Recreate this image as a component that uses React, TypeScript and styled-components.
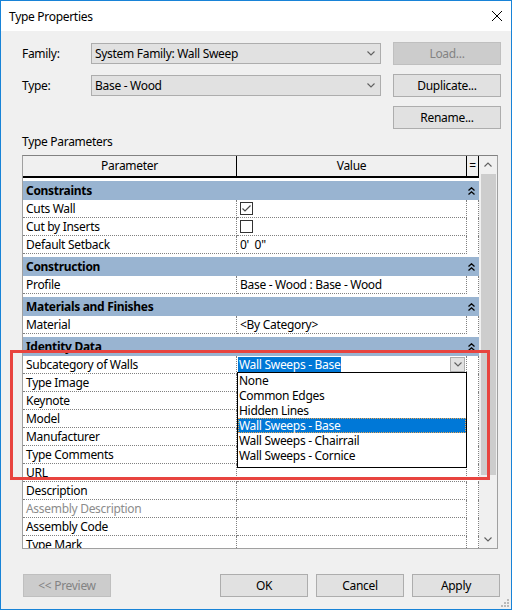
import React from 'react'
import styled, { createGlobalStyle } from 'styled-components'

const GlobalStyle = createGlobalStyle`
  html, body {
    margin: 0;
    padding: 0;
    background: #ffffff;
  }
  body {
    font-family: "Noto Sans", "Open Sans", sans-serif;
    font-size: 12px;
    letter-spacing: -0.3px;
    color: #000000;
  }
  * {
    box-sizing: border-box;
  }
`

const Window = styled.div`
  position: relative;
  width: 512px;
  height: 610px;
  border: 1px solid #1883d7;
  background: #f0f0f0;
  display: flex;
  flex-direction: column;
  overflow: hidden;
`

const TitleBar = styled.div`
  height: 30px;
  flex-shrink: 0;
  background: #ffffff;
  display: flex;
  align-items: center;
  justify-content: space-between;
  padding: 0 9px 0 8px;
`

const Body = styled.div`
  flex: 1;
  display: flex;
  flex-direction: column;
  padding: 11px 10px 0 21px;
`

const TopGrid = styled.div`
  display: grid;
  grid-template-columns: 69px 290px 1fr;
  grid-auto-rows: 23px;
  row-gap: 9px;
  align-items: center;
`

const Label = styled.span`
  line-height: 16px;
`

const Combo = styled.div`
  height: 21px;
  background: #e1e1e1;
  border: 1px solid #adadad;
  display: flex;
  align-items: center;
  justify-content: space-between;
  padding: 0 5px 0 3px;
  white-space: nowrap;
`

const Button = styled.button<{ $disabled?: boolean; $width?: number }>`
  height: 23px;
  width: ${(p) => (p.$width ? `${p.$width}px` : 'auto')};
  padding: 0;
  font: inherit;
  letter-spacing: inherit;
  background: ${(p) => (p.$disabled ? '#cccccc' : '#e1e1e1')};
  border: 1px solid ${(p) => (p.$disabled ? '#bfbfbf' : '#adadad')};
  color: ${(p) => (p.$disabled ? '#838383' : '#000000')};
`

const SideButton = styled(Button)`
  margin-left: 12px;
`

const SectionLabel = styled.div`
  margin-top: 5px;
  line-height: 16px;
`

const Table = styled.div`
  margin-top: 5px;
  width: 476px;
  height: 394px;
  border: 1px solid #a0a0a0;
  border-top-color: #828282;
  background: #ffffff;
  display: flex;
`

const GridArea = styled.div`
  flex: 1;
  display: flex;
  flex-direction: column;
  overflow: hidden;
`

const HeaderRow = styled.div`
  display: grid;
  grid-template-columns: 214px 230px 12px;
  height: 22px;
  flex-shrink: 0;
  background: #f0f0f0;
`

const HeaderCell = styled.div`
  border-right: 1px solid #000000;
  border-bottom: 2px solid #000000;
  text-align: center;
  line-height: 20px;
`

const Band = styled.div`
  margin-top: 3px;
  height: 19px;
  flex-shrink: 0;
  background: #99b4d1;
  display: grid;
  grid-template-columns: 444px 12px;
  align-items: center;
  font-weight: bold;
`

const BandTitle = styled.span`
  padding-left: 3px;
  line-height: 19px;
`

const BandToggle = styled.span`
  display: flex;
  padding-left: 1px;
`

const Row = styled.div`
  display: grid;
  grid-template-columns: 214px 230px 12px;
  height: 18px;
  flex-shrink: 0;
`

const Cell = styled.div<{ $muted?: boolean }>`
  position: relative;
  border-right: 1px dotted #808080;
  border-bottom: 1px dotted #808080;
  padding-left: 3px;
  line-height: 17px;
  white-space: pre;
  color: ${(p) => (p.$muted ? '#8c8c8c' : '#000000')};
  display: flex;
  align-items: center;
`

const EditCell = styled(Cell)`
  padding-left: 1px;
  overflow: visible;
`

const EqCell = styled.div`
  border-right: 1px dotted #808080;
`

const Selection = styled.span`
  background: #0078d7;
  color: #ffffff;
  height: 15px;
  line-height: 15px;
  padding: 0 1px;
`

const DropButton = styled.span`
  margin-left: auto;
  margin-right: 1px;
  width: 15px;
  height: 15px;
  background: #e1e1e1;
  border: 1px solid #adadad;
  display: flex;
  align-items: center;
  justify-content: center;
`

const DropList = styled.div`
  position: absolute;
  left: 0;
  top: calc(100% - 1px);
  width: 230px;
  height: 96px;
  background: #ffffff;
  border: 1px solid #000000;
  z-index: 3;
`

const DropItem = styled.div<{ $active?: boolean }>`
  height: 15px;
  line-height: 15px;
  padding-left: 1px;
  white-space: nowrap;
  overflow: hidden;
  background: ${(p) => (p.$active ? '#0078d7' : 'transparent')};
  color: ${(p) => (p.$active ? '#ffffff' : '#000000')};
  outline: ${(p) => (p.$active ? '1px dotted #e9a451' : 'none')};
  outline-offset: -1px;
`

const CheckBox = styled.span`
  width: 13px;
  height: 13px;
  border: 1px solid #333333;
  background: #ffffff;
  display: flex;
  align-items: center;
  justify-content: center;
`

const Scrollbar = styled.div`
  width: 18px;
  flex-shrink: 0;
  background: #f0f0f0;
  display: flex;
  flex-direction: column;
`

const ScrollArrow = styled.div`
  height: 17px;
  display: flex;
  align-items: center;
  justify-content: center;
`

const Thumb = styled.div`
  height: 301px;
  margin: 1px 1px 0 2px;
  background: #cdcdcd;
`

const Track = styled.div`
  flex: 1;
`

const Footer = styled.div`
  margin-top: 25px;
  display: flex;
  gap: 8px;
  padding: 0 1px;
`

const Spacer = styled.div`
  flex: 1;
`

const Highlight = styled.div`
  position: absolute;
  left: 9px;
  top: 349px;
  width: 480px;
  height: 130px;
  border: 3px solid #e8443f;
  pointer-events: none;
  z-index: 5;
`

const Grip = styled.svg`
  position: absolute;
  right: 1px;
  bottom: 1px;
`

const Chevron = ({ up = false, color = '#606060' }: { up?: boolean; color?: string }) => (
  <svg width="8" height="5" viewBox="0 0 8 5">
    <polyline
      points={up ? '0.5,4.5 4,1 7.5,4.5' : '0.5,0.5 4,4 7.5,0.5'}
      fill="none"
      stroke={color}
      strokeWidth="1.1"
    />
  </svg>
)

const Collapse = () => (
  <svg width="7" height="8" viewBox="0 0 7 8">
    <polyline points="0.5,3.5 3.5,0.8 6.5,3.5" fill="none" stroke="#000" strokeWidth="1.3" />
    <polyline points="0.5,7.5 3.5,4.8 6.5,7.5" fill="none" stroke="#000" strokeWidth="1.3" />
  </svg>
)

const Check = () => (
  <svg width="11" height="11" viewBox="0 0 11 11">
    <polyline points="1.5,5.5 4,8 9.5,2.5" fill="none" stroke="#4a4a4a" strokeWidth="1.2" />
  </svg>
)

type Value =
  | { kind: 'text'; text: string }
  | { kind: 'check'; checked: boolean }
  | { kind: 'edit' }
  | { kind: 'none' }

type Param = { label: string; value: Value; muted?: boolean }

const empty: Value = { kind: 'none' }

const groups: { name: string; rows: Param[] }[] = [
  {
    name: 'Constraints',
    rows: [
      { label: 'Cuts Wall', value: { kind: 'check', checked: true } },
      { label: 'Cut by Inserts', value: { kind: 'check', checked: false } },
      { label: 'Default Setback', value: { kind: 'text', text: "0'  0\"" } },
    ],
  },
  {
    name: 'Construction',
    rows: [{ label: 'Profile', value: { kind: 'text', text: 'Base - Wood : Base - Wood' } }],
  },
  {
    name: 'Materials and Finishes',
    rows: [{ label: 'Material', value: { kind: 'text', text: '<By Category>' } }],
  },
  {
    name: 'Identity Data',
    rows: [
      { label: 'Subcategory of Walls', value: { kind: 'edit' } },
      { label: 'Type Image', value: empty },
      { label: 'Keynote', value: empty },
      { label: 'Model', value: empty },
      { label: 'Manufacturer', value: empty },
      { label: 'Type Comments', value: empty },
      { label: 'URL', value: empty },
      { label: 'Description', value: empty },
      { label: 'Assembly Description', value: empty, muted: true },
      { label: 'Assembly Code', value: empty },
      { label: 'Type Mark', value: empty },
    ],
  },
]

const options = [
  'None',
  'Common Edges',
  'Hidden Lines',
  'Wall Sweeps - Base',
  'Wall Sweeps - Chairrail',
  'Wall Sweeps - Cornice',
]

function ValueCell({ value }: { value: Value }) {
  if (value.kind === 'check') {
    return (
      <Cell>
        <CheckBox>{value.checked && <Check />}</CheckBox>
      </Cell>
    )
  }
  if (value.kind === 'edit') {
    return (
      <EditCell>
        <Selection>Wall Sweeps - Base</Selection>
        <DropButton>
          <Chevron />
        </DropButton>
        <DropList>
          {options.map((o) => (
            <DropItem key={o} $active={o === 'Wall Sweeps - Base'}>
              {o}
            </DropItem>
          ))}
        </DropList>
      </EditCell>
    )
  }
  return <Cell>{value.kind === 'text' ? value.text : ''}</Cell>
}

export default function App() {
  return (
    <>
      <GlobalStyle />
      <Window>
        <TitleBar>
          <span>Type Properties</span>
          <svg width="10" height="10" viewBox="0 0 10 10">
            <line x1="0" y1="0" x2="10" y2="10" stroke="#000" strokeWidth="1" />
            <line x1="10" y1="0" x2="0" y2="10" stroke="#000" strokeWidth="1" />
          </svg>
        </TitleBar>
        <Body>
          <TopGrid>
            <Label>Family:</Label>
            <Combo>
              System Family: Wall Sweep
              <Chevron />
            </Combo>
            <SideButton $disabled>Load...</SideButton>
            <Label>Type:</Label>
            <Combo>
              Base - Wood
              <Chevron />
            </Combo>
            <SideButton>Duplicate...</SideButton>
            <span />
            <span />
            <SideButton>Rename...</SideButton>
          </TopGrid>
          <SectionLabel>Type Parameters</SectionLabel>
          <Table>
            <GridArea>
              <HeaderRow>
                <HeaderCell>Parameter</HeaderCell>
                <HeaderCell>Value</HeaderCell>
                <HeaderCell>=</HeaderCell>
              </HeaderRow>
              {groups.map((g) => (
                <React.Fragment key={g.name}>
                  <Band>
                    <BandTitle>{g.name}</BandTitle>
                    <BandToggle>
                      <Collapse />
                    </BandToggle>
                  </Band>
                  {g.rows.map((r) => (
                    <Row key={r.label}>
                      <Cell $muted={r.muted}>{r.label}</Cell>
                      <ValueCell value={r.value} />
                      <EqCell />
                    </Row>
                  ))}
                </React.Fragment>
              ))}
            </GridArea>
            <Scrollbar>
              <ScrollArrow>
                <Chevron up />
              </ScrollArrow>
              <Thumb />
              <Track />
              <ScrollArrow>
                <Chevron />
              </ScrollArrow>
            </Scrollbar>
          </Table>
          <Footer>
            <Button $disabled $width={88}>
              &lt;&lt; Preview
            </Button>
            <Spacer />
            <Button $width={88}>OK</Button>
            <Button $width={88}>Cancel</Button>
            <Button $width={88}>Apply</Button>
          </Footer>
        </Body>
        <Highlight />
        <Grip width="9" height="9" viewBox="0 0 9 9">
          {[
            [6, 0],
            [3, 3],
            [6, 3],
            [0, 6],
            [3, 6],
            [6, 6],
          ].map(([x, y]) => (
            <rect key={`${x}-${y}`} x={x} y={y} width="2" height="2" fill="#b9b9b9" />
          ))}
        </Grip>
      </Window>
    </>
  )
}
